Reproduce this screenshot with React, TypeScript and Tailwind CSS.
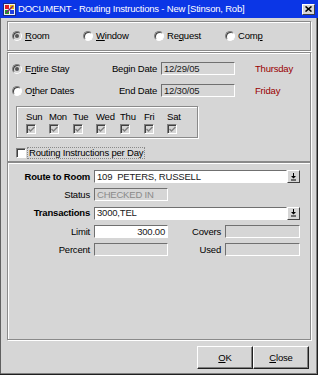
import React from "react";

const font = { fontFamily: '"Liberation Sans", Arial, sans-serif' };

function Radio({ checked }: { checked?: boolean }) {
  return (
    <span
      className={`relative flex items-center justify-center w-[10px] h-[10px] rounded-full border border-t-[#808080] border-l-[#808080] border-b-white border-r-white ${
        checked ? "bg-[#d6d6d6]" : "bg-white"
      } shadow-[inset_1px_1px_0_#404040]`}
    >
      {checked && <span className="w-[4px] h-[4px] rounded-full bg-[#555]" />}
    </span>
  );
}

function Check({ checked, white }: { checked?: boolean; white?: boolean }) {
  return (
    <span
      className={`flex items-center justify-center w-[10px] h-[10px] border border-t-[#808080] border-l-[#808080] border-b-white border-r-white ${
        white ? "bg-white" : "bg-[#d6d6d6]"
      } shadow-[inset_1px_1px_0_#404040]`}
    >
      {checked && (
        <svg width="7" height="7" viewBox="0 0 7 7">
          <path d="M0.5 3 L2.5 5 L6.5 1" stroke="#808080" strokeWidth="1.4" fill="none" />
        </svg>
      )}
    </span>
  );
}

function Field({
  w,
  white,
  children,
  right,
  gray,
}: {
  w: string;
  white?: boolean;
  children?: React.ReactNode;
  right?: boolean;
  gray?: boolean;
}) {
  return (
    <div
      className={`${w} h-[13px] flex items-center px-[2px] border border-t-[#707070] border-l-[#707070] border-b-white border-r-white whitespace-pre ${
        white ? "bg-white" : "bg-[#d6d6d6]"
      } ${right ? "justify-end" : ""} ${gray ? "text-[#8a8a8a]" : "text-[#202020]"}`}
    >
      {children}
    </div>
  );
}

function DropBtn() {
  return (
    <div className="w-[13px] h-[13px] flex items-center justify-center bg-[#d6d6d6] border border-t-white border-l-white border-b-[#404040] border-r-[#404040]">
      <svg width="7" height="8" viewBox="0 0 7 8">
        <path d="M3 0 H4 V3 H6 L3.5 5.5 L1 3 H3 Z" fill="#000" />
        <rect x="1" y="6.5" width="5" height="1" fill="#000" />
      </svg>
    </div>
  );
}

const etched =
  "border border-[#8a8a8a] shadow-[inset_1px_1px_0_#fff,1px_1px_0_#fff]";

function U({ children }: { children: React.ReactNode }) {
  return <span className="underline underline-offset-[1px]">{children}</span>;
}

export default function App() {
  const days = [
    ["Sun", "w-[23px]"],
    ["Mon", "w-[24px]"],
    ["Tue", "w-[23px]"],
    ["Wed", "w-[24px]"],
    ["Thu", "w-[24px]"],
    ["Fri", "w-[23px]"],
    ["Sat", "w-[14px]"],
  ];
  return (
    <div
      style={font}
      className="w-[318px] h-[375px] flex flex-col bg-[#d6d6d6] text-[9.5px] tracking-[-0.2px] text-black leading-none shadow-[inset_-1px_-1px_0_#202020,inset_1px_0_0_#606060,inset_-2px_-2px_0_#808080]"
    >
      {/* Title bar */}
      <div className="h-[18px] flex items-center bg-[#0b36e6] shrink-0">
        <div className="ml-[3px] w-[13px] h-[13px]">
          <svg width="13" height="13" viewBox="0 0 13 13">
            <rect x="0.5" y="0.5" width="12" height="12" fill="#f0f0f0" stroke="#1a2a80" />
            <rect x="2" y="2" width="4" height="4" fill="#e02020" />
            <rect x="7" y="2" width="4" height="4" fill="#f0c000" />
            <rect x="2" y="7" width="4" height="4" fill="#20a020" />
            <rect x="7" y="7" width="4" height="4" fill="#2040e0" />
            <path d="M3 10 L10 3" stroke="#802080" strokeWidth="1.5" />
          </svg>
        </div>
        <span className="ml-[2px] text-white text-[9.5px]">
          DOCUMENT - Routing Instructions - New [Stinson, Rob]
        </span>
        <div className="ml-auto mr-[3px] w-[13px] h-[11px] flex items-center justify-center bg-[#d6d6d6] border border-t-white border-l-white border-b-[#404040] border-r-[#404040]">
          <svg width="7" height="6" viewBox="0 0 7 6">
            <path d="M0.5 0.5 L6.5 5.5 M6.5 0.5 L0.5 5.5" stroke="#000" strokeWidth="1.6" />
          </svg>
        </div>
      </div>

      <div className="px-[7px] flex flex-col">
        {/* Panel 1 */}
        <div className={`mt-[3px] h-[30px] ${etched} flex items-center pl-[4px]`}>
          {[
            ["Room", true, <><U>R</U>oom</>],
            ["Window", false, <><U>W</U>indow</>],
            ["Request", false, <>Re<U>q</U>uest</>],
            ["Comp", false, <>Com<U>p</U></>],
          ].map(([k, c, label]) => (
            <div key={k as string} className="w-[71px] flex items-center">
              <Radio checked={c as boolean} />
              <span className="ml-[3px]">{label as React.ReactNode}</span>
            </div>
          ))}
        </div>

        {/* Panel 2 */}
        <div className={`mt-[1px] h-[110px] ${etched} flex flex-col`}>
          <div className="mt-[9px] h-[13px] flex items-center">
            <div className="w-[149px] flex items-center justify-between pl-[4px]">
              <div className="flex items-center">
                <Radio checked />
                <span className="ml-[3px]">
                  E<U>n</U>tire Stay
                </span>
              </div>
              <span>Begin Date</span>
            </div>
            <div className="ml-[4px]">
              <Field w="w-[74px]">12/29/05</Field>
            </div>
            <span className="ml-[20px] text-[#990000]">Thursday</span>
          </div>
          <div className="mt-[9px] h-[13px] flex items-center">
            <div className="w-[149px] flex items-center justify-between pl-[4px]">
              <div className="flex items-center">
                <Radio />
                <span className="ml-[3px]">
                  O<U>t</U>her Dates
                </span>
              </div>
              <span>End Date</span>
            </div>
            <div className="ml-[4px]">
              <Field w="w-[74px]">12/30/05</Field>
            </div>
            <span className="ml-[20px] text-[#990000]">Friday</span>
          </div>
          <div className={`mt-[9px] ml-[8px] w-[182px] h-[32px] ${etched} flex pl-[9px] pt-[5px]`}>
            {days.map(([d, w]) => (
              <div key={d} className={`${w} flex flex-col`}>
                <span className="h-[10px] leading-[10px] whitespace-nowrap">{d}</span>
                <div className="mt-[2px]">
                  <Check checked />
                </div>
              </div>
            ))}
          </div>
          <div className="mt-[10px] ml-[8px] flex items-center">
            <Check white />
            <span className="ml-[2px] px-[1px] outline outline-1 outline-dotted outline-[#8a8a8a] leading-[10px]">
              Routing Instructions per Day
            </span>
          </div>
        </div>

        {/* Panel 3 */}
        <div className={`h-[178px] ${etched} flex flex-col pt-[7px] gap-[5.3px]`}>
          <div className="flex items-center">
            <span className="w-[82px] text-right font-bold">Route to Room</span>
            <div className="ml-[4px] flex">
              <Field w="w-[193px]" white>
                {"109  PETERS, RUSSELL"}
              </Field>
              <DropBtn />
            </div>
          </div>
          <div className="flex items-center">
            <span className="w-[82px] text-right">Status</span>
            <div className="ml-[4px]">
              <Field w="w-[74px]" gray>
                CHECKED IN
              </Field>
            </div>
          </div>
          <div className="flex items-center">
            <span className="w-[82px] text-right font-bold">Transactions</span>
            <div className="ml-[4px] flex">
              <Field w="w-[193px]" white>
                3000,TEL
              </Field>
              <DropBtn />
            </div>
          </div>
          <div className="flex items-center">
            <span className="w-[82px] text-right">Limit</span>
            <div className="ml-[4px]">
              <Field w="w-[74px]" white right>
                300.00
              </Field>
            </div>
            <span className="w-[53px] text-right">Covers</span>
            <div className="ml-[4px]">
              <Field w="w-[75px]" />
            </div>
          </div>
          <div className="flex items-center">
            <span className="w-[82px] text-right">Percent</span>
            <div className="ml-[4px]">
              <Field w="w-[74px]" />
            </div>
            <span className="w-[53px] text-right">Used</span>
            <div className="ml-[4px]">
              <Field w="w-[75px]" />
            </div>
          </div>
        </div>

        {/* Buttons */}
        <div className="mt-[6px] flex justify-end pr-[2px]">
          {[
            ["OK", <><U>O</U>K</>],
            ["Close", <><U>C</U>lose</>],
          ].map(([k, l]) => (
            <div
              key={k as string}
              className="w-[56px] h-[23px] flex items-center justify-center bg-[#d6d6d6] border border-t-white border-l-white border-b-[#202020] border-r-[#202020] shadow-[inset_-1px_-1px_0_#808080]"
            >
              {l as React.ReactNode}
            </div>
          ))}
        </div>
      </div>
    </div>
  );
}
